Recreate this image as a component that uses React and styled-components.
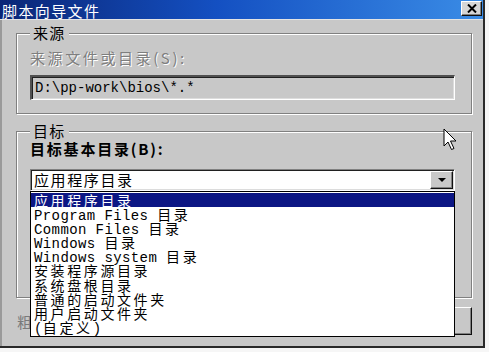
import React from "react";
import styled, { createGlobalStyle, css } from "styled-components";

const GlobalStyle = createGlobalStyle`
  html, body {
    margin: 0;
    padding: 0;
    background: #f6f6f6;
  }
  * {
    box-sizing: border-box;
  }
`;

const gray = "#c8c8c8";

const sunken = css`
  border-top: 1px solid #808080;
  border-left: 1px solid #808080;
  border-bottom: 1px solid #ffffff;
  border-right: 1px solid #ffffff;
  box-shadow: inset 1px 1px 0 #202020, inset -1px -1px 0 #dcdcdc;
`;

const raised = css`
  border-top: 1px solid #ffffff;
  border-left: 1px solid #ffffff;
  border-bottom: 1px solid #101010;
  border-right: 1px solid #101010;
  box-shadow: inset -1px -1px 0 #808080;
`;

const Window = styled.div`
  position: relative;
  width: 485px;
  height: 348px;
  display: flex;
  flex-direction: column;
  background: ${gray};
  border-right: 2px solid #2a2a2a;
  border-bottom: 2px solid #2a2a2a;
  font-family: "Noto Sans CJK SC", "Liberation Sans", sans-serif;
`;

const TitleBar = styled.div`
  height: 20px;
  display: flex;
  align-items: center;
  justify-content: space-between;
  padding: 1px 1px 0 2px;
  background: linear-gradient(90deg, #0a2676 0%, #1450c2 45%, #3a8ce6 100%);
  border-bottom: 1px solid #e4e4e4;
`;

const Title = styled.span`
  color: #ffffff;
  font-size: 15px;
  line-height: 17px;
  letter-spacing: 1.4px;
`;

const CloseButton = styled.div`
  align-self: flex-start;
  width: 21px;
  height: 15px;
  display: flex;
  align-items: center;
  justify-content: center;
  background: #d6d6d6;
  ${raised};
`;

const Body = styled.div`
  flex: 1;
  display: flex;
  flex-direction: column;
  padding: 5px 11px 0 14px;
  border-left: 2px solid #9a9a9a;
`;

const Group = styled.fieldset`
  margin: ${(p) => (p.$first ? "0" : "9px")} 0 0 0;
  padding: 0 16px ${(p) => p.$bottom}px 13px;
  border: 1px solid #808080;
  box-shadow: 1px 1px 0 #ffffff, inset 1px 1px 0 #ffffff;
  min-width: 0;
`;

const Legend = styled.legend`
  padding: 0 3px;
  font-size: 15px;
  line-height: 16px;
  letter-spacing: 1.3px;
  color: #000000;
  background: ${gray};
`;

const FieldLabel = styled.div`
  margin-top: ${(p) => p.$top}px;
  font-size: 15px;
  line-height: 16px;
  letter-spacing: ${(p) => (p.$disabled ? "2.6px" : "1.8px")};
  font-weight: ${(p) => (p.$bold ? 700 : 400)};
  color: ${(p) => (p.$disabled ? "#7e7e7e" : "#000000")};
  text-shadow: ${(p) => (p.$disabled ? "1px 1px 0 #ffffff" : "none")};
`;

const PathInput = styled.div`
  margin-top: 9px;
  width: 425px;
  height: 25px;
  display: flex;
  align-items: center;
  padding-left: 3px;
  background: ${gray};
  font-family: "Liberation Mono", monospace;
  font-size: 14px;
  color: #000000;
  ${sunken};
  border-top-width: 2px;
  border-left-width: 2px;
  border-top-color: #505050;
  border-left-color: #505050;
`;

const ComboWrap = styled.div`
  position: relative;
  margin-top: 12px;
  width: 425px;
`;

const Combo = styled.div`
  height: 22px;
  display: flex;
  align-items: center;
  justify-content: space-between;
  padding: 0 1px 0 3px;
  background: #ffffff;
  ${sunken};
`;

const ComboText = styled.span`
  font-size: 15px;
  line-height: 16px;
  letter-spacing: 1.6px;
  color: #000000;
`;

const DropButton = styled.div`
  width: 23px;
  height: 18px;
  display: flex;
  align-items: center;
  justify-content: center;
  background: ${gray};
  ${raised};
`;

const Arrow = styled.div`
  width: 0;
  height: 0;
  border-left: 4px solid transparent;
  border-right: 4px solid transparent;
  border-top: 4px solid #000000;
`;

const DropList = styled.ul`
  position: absolute;
  top: 100%;
  left: 0;
  width: 425px;
  margin: 0;
  padding: 1px 0 2px;
  list-style: none;
  background: #ffffff;
  border: 1px solid #000000;
  z-index: 2;
`;

const Item = styled.li`
  height: 14.1px;
  padding-left: 3px;
  font-family: "Liberation Mono", monospace;
  font-size: 14px;
  letter-spacing: 0.4px;
  line-height: 14px;
  white-space: pre;
  color: ${(p) => (p.$selected ? "#ffffff" : "#000000")};
  background: ${(p) => (p.$selected ? "#0c1684" : "transparent")};
`;

const Han = styled.span`
  font-family: "Noto Sans CJK SC", sans-serif;
  font-size: 14px;
  line-height: 14px;
  letter-spacing: 2.6px;
`;

const BottomRow = styled.div`
  margin-top: 9px;
  height: 28px;
  display: flex;
  align-items: center;
  justify-content: space-between;
  padding-left: 1px;
`;

const FaintText = styled.span`
  font-size: 15px;
  color: #7a7a7a;
`;

const PushButton = styled.div`
  width: 92px;
  height: 28px;
  background: ${gray};
  ${raised};
`;

const Cursor = styled.svg`
  position: absolute;
  left: 443px;
  top: 128px;
`;

const items = [
  "应用程序目录",
  "Program Files 目录",
  "Common Files 目录",
  "Windows 目录",
  "Windows system 目录",
  "安装程序源目录",
  "系统盘根目录",
  "普通的启动文件夹",
  "用户启动文件夹",
  "(自定义)",
];

const mixed = (text) =>
  text
    .split(/([\u3400-\u9fff]+)/)
    .filter(Boolean)
    .map((part, i) =>
      /[\u3400-\u9fff]/.test(part) ? <Han key={i}>{part}</Han> : part
    );

const App = () => {
  return (
    <>
      <GlobalStyle />
      <Window>
        <TitleBar>
          <Title>脚本向导文件</Title>
          <CloseButton>
            <svg width="10" height="9" viewBox="0 0 10 9">
              <path d="M1 0.5 L9 8.5 M9 0.5 L1 8.5" stroke="#000" strokeWidth="2" />
            </svg>
          </CloseButton>
        </TitleBar>
        <Body>
          <Group $first $bottom={13}>
            <Legend>来源</Legend>
            <FieldLabel $top={9} $disabled>
              来源文件或目录(S):
            </FieldLabel>
            <PathInput>D:\pp-work\bios\*.*</PathInput>
          </Group>
          <Group $bottom={106}>
            <Legend>目标</Legend>
            <FieldLabel $top={2} $bold>
              目标基本目录(B):
            </FieldLabel>
            <ComboWrap>
              <Combo>
                <ComboText>应用程序目录</ComboText>
                <DropButton>
                  <Arrow />
                </DropButton>
              </Combo>
              <DropList>
                {items.map((text, i) => (
                  <Item key={text} $selected={i === 0}>
                    {mixed(text)}
                  </Item>
                ))}
              </DropList>
            </ComboWrap>
          </Group>
          <BottomRow>
            <FaintText>粗</FaintText>
            <PushButton />
          </BottomRow>
        </Body>
        <Cursor width="16" height="24" viewBox="0 0 16 24">
          <path
            d="M1 1 L1 18 L5 14 L8.5 21.5 L11 20.5 L7.5 13 L13 13 Z"
            fill="#ffffff"
            stroke="#000000"
            strokeWidth="1"
            strokeLinejoin="miter"
          />
        </Cursor>
      </Window>
    </>
  );
};

export default App;
